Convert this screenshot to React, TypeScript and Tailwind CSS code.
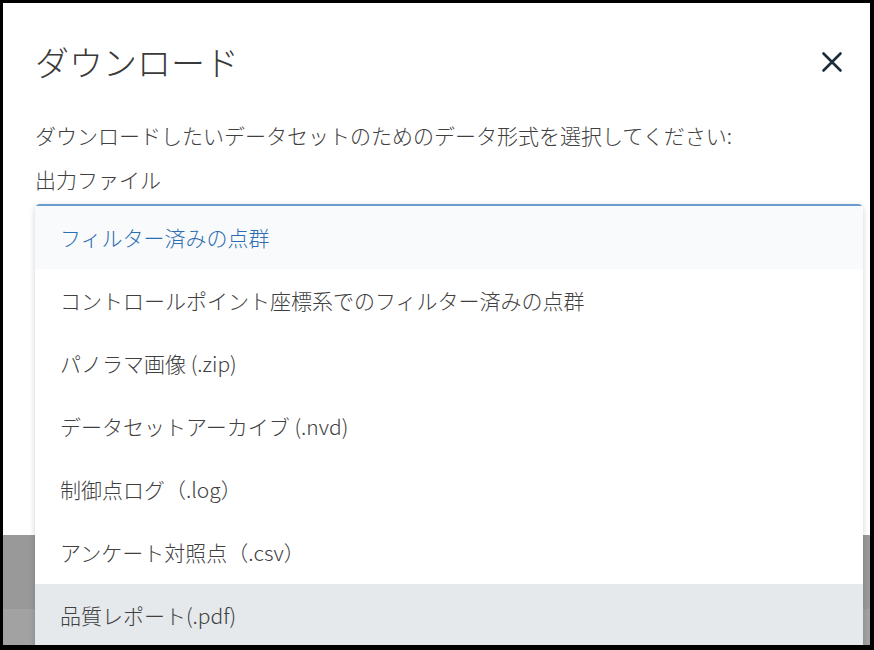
import React from "react";

const formats = [
  "フィルター済みの点群",
  "コントロールポイント座標系でのフィルター済みの点群",
  "パノラマ画像 (.zip)",
  "データセットアーカイブ (.nvd)",
  "制御点ログ（.log）",
  "アンケート対照点（.csv）",
  "品質レポート(.pdf)",
];

const font = {
  fontFamily: '"Noto Sans CJK JP", "Noto Sans", "Liberation Sans", sans-serif',
};

function CloseIcon() {
  return (
    <svg width="22" height="22" viewBox="0 0 22 22" fill="none">
      <path
        d="M2.5 2.5 L19.5 19.5 M19.5 2.5 L2.5 19.5"
        stroke="#1e2d3d"
        strokeWidth="2.6"
        strokeLinecap="round"
      />
    </svg>
  );
}

export default function App() {
  const selected = 0;
  const hovered = 6;

  return (
    <div
      className="h-[650px] w-full overflow-hidden bg-black pt-[3px] pl-[3px] pr-[4px] pb-[5px]"
      style={font}
    >
      <div className="relative flex h-full flex-col overflow-hidden">
        {/* Dialog */}
        <div className="h-[532px] bg-white pl-8 pr-[27px]">
          <div className="flex items-center justify-between pt-[37px]">
            <h1 className="text-[34px] leading-[44px] font-light text-[#3a3a3a]">
              ダウンロード
            </h1>
            <button className="flex h-[44px] items-center">
              <CloseIcon />
            </button>
          </div>
          <div className="mt-[29px] text-[21px] leading-[44px] font-light text-[#404040]">
            <p>ダウンロードしたいデータセットのためのデータ形式を選択してください:</p>
            <p>出力ファイル</p>
          </div>
        </div>

        {/* Backdrop under the dialog */}
        <div className="flex flex-1 flex-col bg-[#9a9a9a]">
          <div className="h-[74px] bg-[#999]" />
          <div className="flex-1 bg-[#a2a2a2]" />
        </div>

        {/* Open select menu */}
        <div className="absolute top-[201px] left-[32px] right-[7px] rounded-t-[5px] border-t-2 border-[#6c9bd0] bg-white shadow-[0_2px_6px_rgba(0,0,0,0.18)]">
          {formats.map((label, i) => (
            <div
              key={label}
              className={
                "flex h-[63px] items-center pl-[25px] text-[21px] font-light " +
                (i === selected
                  ? "bg-[#f9fafb] text-[#2d6db3]"
                  : i === hovered
                  ? "bg-[#e5e9ec] text-[#404040]"
                  : "bg-white text-[#404040]")
              }
            >
              {label}
            </div>
          ))}
        </div>
      </div>
    </div>
  );
}
